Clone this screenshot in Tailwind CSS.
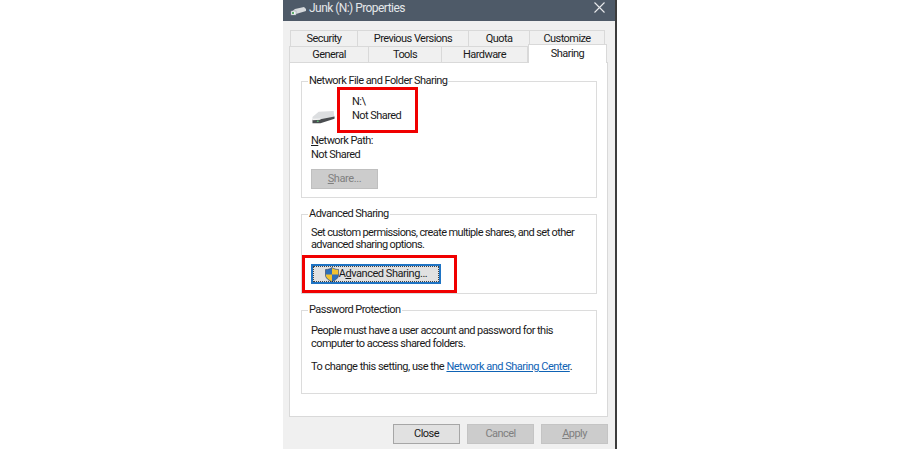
<!DOCTYPE html>
<html>
  <head>
    <meta charset="UTF-8">
    <title>Junk (N:) Properties</title>
    <script src="https://cdn.jsdelivr.net/npm/@tailwindcss/browser@4"></script>
  </head>
  <body class="bg-white">
    <div class="w-[900px] h-[450px] overflow-hidden flex justify-center font-['Roboto',sans-serif] text-[11px] tracking-[-0.55px] leading-[14px] text-[#1a1a1a]">
      <!-- dialog window -->
      <div class="relative w-[334px] h-[449px] bg-[#f0f0f0] border-r-2 border-[#3c3c3c] flex flex-col">
        <div class="h-[21px] bg-[#4e5a68] flex items-center pl-[7px] pr-[10px] text-[#e4e7ea] text-[12px] tracking-[-0.55px] shrink-0">
          <svg class="w-[17px] h-[12px] mr-[2px] mb-[2px]" viewBox="0 0 17 12">
            <path d="M1 8 L5 5 L14 3 L16 5 L16 7 L6 10 L1 10 Z" fill="#d6d9dc"/>
            <rect x="1" y="7" width="5" height="4" fill="#f4f6f7" stroke="#8a949c" stroke-width="0.5"/>
            <rect x="2" y="8" width="2" height="2" fill="#5fae6b"/>
          </svg>
          <span class="mb-[6px]">Junk (N:) Properties</span>
          <svg class="ml-auto w-[11px] h-[11px] mb-[6px]" viewBox="0 0 11 11" fill="none" stroke="#e8eaec" stroke-width="1.1">
            <path d="M0.5 0.5 L10.5 10.5 M10.5 0.5 L0.5 10.5"/>
          </svg>
        </div>

        <div class="flex flex-col px-[6px] pt-[9px]">
          <!-- tabs -->
          <div class="flex pl-[1px] h-[16px] text-center">
            <div class="w-[68px] pt-[1px] bg-[#f0f0f0] border border-b-0 border-[#d9d9d9]">Security</div>
            <div class="w-[111px] pt-[1px] bg-[#f0f0f0] border border-b-0 border-l-0 border-[#d9d9d9]">Previous Versions</div>
            <div class="w-[61px] pt-[1px] bg-[#f0f0f0] border border-b-0 border-l-0 border-[#d9d9d9]">Quota</div>
            <div class="w-[75px] pt-[1px] bg-[#f0f0f0] border border-b-0 border-l-0 border-[#d9d9d9]">Customize</div>
          </div>
          <div class="flex h-[16px] text-center relative z-10">
            <div class="w-[80px] pt-[1px] bg-[#f0f0f0] border border-b-0 border-[#d9d9d9]">General</div>
            <div class="w-[73px] pt-[1px] bg-[#f0f0f0] border border-b-0 border-l-0 border-[#d9d9d9]">Tools</div>
            <div class="w-[86px] pt-[1px] bg-[#f0f0f0] border border-b-0 border-l-0 border-[#d9d9d9]">Hardware</div>
            <div class="w-[79px] h-[19px] -mt-[2px] pt-[2px] bg-white border border-b-0 border-[#d9d9d9]">Sharing</div>
          </div>

          <!-- sharing page -->
          <div class="w-[319px] h-[355px] bg-white border border-[#d9d9d9] px-[11px] pt-[11px] flex flex-col gap-[9px]">
            <fieldset class="w-[296px] min-w-0 h-[124px] border border-[#dcdcdc] px-[9px] shrink-0">
              <legend class="ml-[-3px] px-[1px]">Network File and Folder Sharing</legend>
              <div class="flex items-end h-[35px]">
                <svg class="w-[25px] h-[15px] mb-[-2px]" viewBox="0 0 27 17">
                  <path d="M1 8 L8 2 L25 1 L26 9 L10 12 L1 12 Z" fill="#dcdee0"/>
                  <path d="M1 11 L10 10.500 L26 7.500 L26 10 L10 15 L1 15 Z" fill="#4a4d50"/>
                  <path d="M1 10 L10 9.500 L10 11 L1 11.500 Z" fill="#f3f3f3"/>
                  <rect x="6" y="12" width="2" height="1.500" fill="#62c47a"/>
                </svg>
                <div class="ml-[16px]">
                  <div>N:\</div>
                  <div>Not Shared</div>
                </div>
              </div>
              <div class="mt-[11px]"><span class="underline">N</span>etwork Path:</div>
              <div>Not Shared</div>
              <div class="mt-[7px] w-[67px] h-[20px] bg-[#cccccc] border border-[#bfbfbf] text-[#7f7f7f] text-center leading-[18px] tracking-[-0.4px]"><span class="underline">S</span>hare...</div>
            </fieldset>

            <fieldset class="w-[296px] min-w-0 h-[87px] border border-[#dcdcdc] px-[9px] shrink-0">
              <legend class="ml-[-3px] px-[1px]">Advanced Sharing</legend>
              <div class="mt-[6px] leading-[12px] tracking-[-0.62px] whitespace-nowrap">Set custom permissions, create multiple shares, and set other<br>advanced sharing options.</div>
              <div class="mt-[13px] w-[130px] h-[20px] bg-[#e1e1e1] border-2 border-[#1f74c4] flex items-center justify-center tracking-[-0.45px] outline-1 -outline-offset-3 outline-dotted outline-black/70">
                <svg class="w-[14px] h-[15px] shrink-0" viewBox="0 0 14 15">
                  <path d="M7 0.500 C9 2 11 2.500 13.500 2.500 L13.500 8 C13.500 11 10.500 13.500 7 14.500 C3.500 13.500 0.500 11 0.500 8 L0.500 2.500 C3 2.500 5 2 7 0.500 Z" fill="#2f6fb8" stroke="#33405a" stroke-width="0.6"/>
                  <path d="M7 1 L7 7.500 L13.200 7.500 L13.200 2.800 C11 2.800 9 2.300 7 1 Z" fill="#f2c230"/>
                  <path d="M7 7.500 L0.800 7.500 C0.800 10.500 3.500 13 7 14.200 Z" fill="#f2c230"/>
                </svg>
                <span>A<span class="underline">d</span>vanced Sharing...</span>
              </div>
            </fieldset>

            <fieldset class="w-[296px] min-w-0 h-[91px] border border-[#dcdcdc] px-[9px] shrink-0">
              <legend class="ml-[-3px] px-[1px]">Password Protection</legend>
              <div class="mt-[8px] leading-[12.5px] whitespace-nowrap">People must have a user account and password for this<br>computer to access shared folders.</div>
              <div class="mt-[10px] leading-[13px] tracking-[-0.5px] whitespace-nowrap">To change this setting, use the <span class="text-[#0f63b5] underline">Network and Sharing Center</span>.</div>
            </fieldset>
          </div>

          <!-- footer buttons -->
          <div class="flex justify-end gap-[7px] mt-[7px] pr-[1px] text-center leading-[18px]">
            <div class="w-[67px] h-[20px] bg-[#e1e1e1] border border-[#a6a6a6]">Close</div>
            <div class="w-[67px] h-[20px] bg-[#cccccc] border border-[#c4c4c4] text-[#7f7f7f]">Cancel</div>
            <div class="w-[67px] h-[20px] bg-[#cccccc] border border-[#c4c4c4] text-[#7f7f7f]"><span class="underline">A</span>pply</div>
          </div>
        </div>

        <!-- red annotation boxes -->
        <div class="absolute left-[54px] top-[87px] w-[81px] h-[46px] border-[3px] border-[#f00000]"></div>
        <div class="absolute left-[19px] top-[255px] w-[155px] h-[38px] border-[3px] border-[#f00000]"></div>
      </div>
    </div>
  </body>
</html>
